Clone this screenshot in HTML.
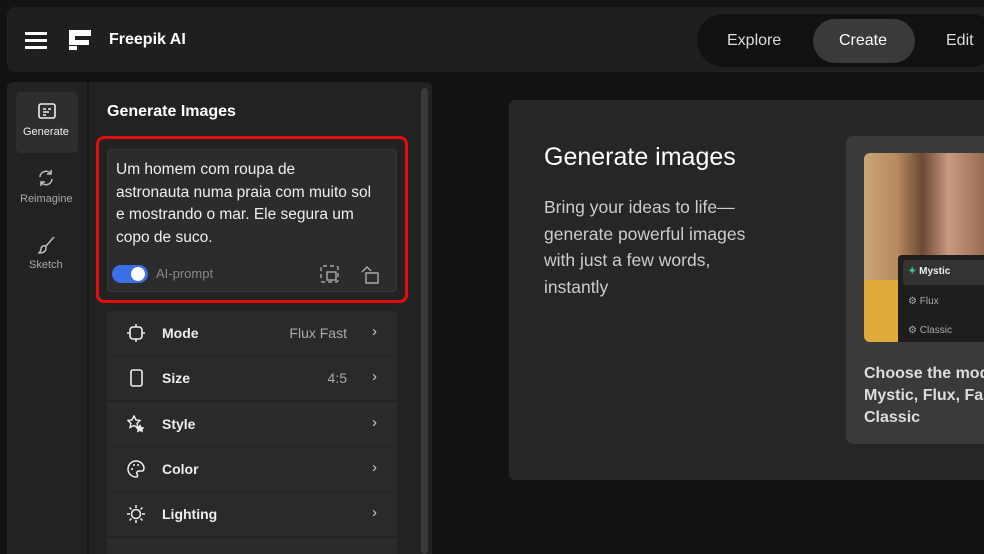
<!DOCTYPE html>
<html style="width:984px;height:554px;overflow:hidden"><head><style>
*{box-sizing:border-box;margin:0;padding:0}
body{width:984px;height:554px;background:#121212;font-family:"Liberation Sans",sans-serif;position:relative;overflow:hidden;color:#fff}
.a{position:absolute}
.row{position:absolute;left:107px;width:290px;height:44px;background:#2a2a2a;}
.row .ic{position:absolute;left:20px;top:13px}
.row .t{position:absolute;left:55px;top:14px;font-weight:bold;font-size:14px;color:#eee}
.row .v{position:absolute;right:50px;top:14px;font-size:14px;color:#aaa}
.row .c{position:absolute;right:20px;top:12px;font-size:15px;color:#ccc}
</style></head><body>
<div class="a" style="left:7px;top:7px;width:985px;height:65px;background:#1f1f1f;border-radius:8px"></div>
<div class="a" style="left:25px;top:32px;width:22px;height:3px;background:#fff;box-shadow:0 7px #fff,0 14px #fff;top:32px"></div>
<svg class="a" style="left:69px;top:30px" width="22" height="21"><path d="M0 0h22v6H6v4h14v5H6v0H0z" fill="#fff"/><rect x="0" y="16" width="8" height="4" fill="#fff"/></svg>
<div class="a" style="left:109px;top:31px;font-weight:bold;font-size:16px">Freepik AI</div>
<div class="a" style="left:697px;top:14px;width:300px;height:53px;background:#111;border-radius:27px"></div>
<div class="a" style="left:813px;top:19px;width:102px;height:44px;background:#3a3a3a;border-radius:22px"></div>
<div class="a" style="left:727px;top:32px;font-size:16px;color:#ddd">Explore</div>
<div class="a" style="left:839px;top:32px;font-size:16px;color:#fff">Create</div>
<div class="a" style="left:946px;top:32px;font-size:16px;color:#ddd">Edit</div>

<div class="a" style="left:7px;top:82px;width:425px;height:472px;background:#222;border-radius:6px 6px 0 0"></div>
<div class="a" style="left:87px;top:82px;width:2px;height:472px;background:#171717"></div>
<div class="a" style="left:421px;top:88px;width:7px;height:466px;background:#3a3a3a;border-radius:4px"></div>
<div class="a" style="left:16px;top:92px;width:62px;height:61px;background:#2e2e2e;border-radius:5px"></div>
<svg class="a" style="left:38px;top:103px" width="18" height="16"><rect x="1" y="1" width="16" height="14" rx="2" fill="none" stroke="#eee" stroke-width="1.6"/><path d="M5 6h3M10 6h3M5 9h6M5 12h3" stroke="#eee" stroke-width="1.4"/></svg>
<div class="a" style="left:23px;top:126px;font-size:11px;color:#eee">Generate</div>
<svg class="a" style="left:37px;top:169px" width="18" height="18"><path d="M3 8a6 6 0 0 1 11-3M15 10a6 6 0 0 1-11 3M14 1v4h-4M4 17v-4h4" fill="none" stroke="#bbb" stroke-width="1.6"/></svg>
<div class="a" style="left:20px;top:193px;font-size:11px;color:#aaa">Reimagine</div>
<svg class="a" style="left:38px;top:236px" width="18" height="18"><path d="M16 1L8 10M8 10c-3-1-5 1-5 3s-1 3-2 4c4 0 7-1 7-5z" fill="none" stroke="#bbb" stroke-width="1.5"/></svg>
<div class="a" style="left:29px;top:259px;font-size:11px;color:#aaa">Sketch</div>

<div class="a" style="left:107px;top:103px;font-size:16px;font-weight:bold">Generate Images</div>
<div class="a" style="left:96px;top:136px;width:312px;height:167px;border:3px solid #e40d0d;border-radius:8px"></div>
<div class="a" style="left:107px;top:149px;width:290px;height:143px;background:#2c2c2c;border:1px solid #383838;border-radius:4px"></div>
<div class="a" style="left:116px;top:159px;font-size:15.5px;line-height:22.5px;color:#eee;white-space:nowrap">Um homem com roupa de<br>astronauta numa praia com muito sol<br>e mostrando o mar. Ele segura um<br>copo de suco.</div>
<div class="a" style="left:112px;top:265px;width:36px;height:18px;background:#3a6fe8;border-radius:9px"><div class="a" style="left:19px;top:2px;width:14px;height:14px;background:#fff;border-radius:50%"></div></div>
<div class="a" style="left:156px;top:266px;font-size:13px;color:#888">AI-prompt</div>
<svg class="a" style="left:320px;top:265px" width="20" height="19"><rect x="1" y="1" width="17" height="16" rx="2" fill="none" stroke="#aaa" stroke-width="1.4" stroke-dasharray="4 3"/><rect x="7" y="7" width="9" height="8" fill="none" stroke="#aaa" stroke-width="1.4"/></svg>
<svg class="a" style="left:360px;top:265px" width="20" height="19"><path d="M2 7l5-5 4 4M6 8h12v10H6z" fill="none" stroke="#aaa" stroke-width="1.4"/></svg>

<div class="row" style="top:311px;border-radius:4px 4px 0 0"><svg class="ic" width="18" height="18"><rect x="3" y="3" width="12" height="12" rx="3" fill="none" stroke="#eee" stroke-width="1.6"/><path d="M9 0v3M9 15v3M0 9h3M15 9h3" stroke="#eee" stroke-width="1.6"/></svg><span class="t">Mode</span><span class="v">Flux Fast</span><span class="c">›</span></div>
<div class="row" style="top:356px"><svg class="ic" width="18" height="18"><rect x="4" y="1" width="11" height="16" rx="2" fill="none" stroke="#eee" stroke-width="1.6"/></svg><span class="t">Size</span><span class="v">4:5</span><span class="c">›</span></div>
<div class="row" style="top:402px"><svg class="ic" width="18" height="18"><path d="M7 1l2 4 4 .5-3 3 1 4-4-2-4 2 1-4-3-3 4-.5z" fill="none" stroke="#eee" stroke-width="1.4"/><path d="M13 9l1.5 3 3 .5-2 2 .5 3-3-1.5-3 1.5.5-3-2-2 3-.5z" fill="#eee"/></svg><span class="t">Style</span><span class="c">›</span></div>
<div class="row" style="top:447px"><svg class="ic" width="18" height="18"><path d="M9 1a8 8 0 0 0 0 16c2 0 2-2 1-3s0-3 2-3h3c2 0 2-2 2-3A8 8 0 0 0 9 1z" fill="none" stroke="#eee" stroke-width="1.5"/><circle cx="5" cy="9" r="1" fill="#eee"/><circle cx="7" cy="5" r="1" fill="#eee"/><circle cx="11" cy="5" r="1" fill="#eee"/></svg><span class="t">Color</span><span class="c">›</span></div>
<div class="row" style="top:492px"><svg class="ic" width="18" height="18"><circle cx="9" cy="9" r="4.5" fill="none" stroke="#eee" stroke-width="1.5"/><path d="M9 0v3M9 15v3M0 9h3M15 9h3M2.5 2.5l2 2M13.5 13.5l2 2M2.5 15.5l2-2M13.5 4.5l2-2" stroke="#eee" stroke-width="1.5"/></svg><span class="t">Lighting</span><span class="c">›</span></div>
<div class="row" style="top:538px;height:16px"></div>

<div class="a" style="left:509px;top:100px;width:490px;height:380px;background:#262626;border-radius:6px"></div>
<div class="a" style="left:544px;top:143px;font-size:25px;color:#fff">Generate images</div>
<div class="a" style="left:544px;top:194px;font-size:17.5px;line-height:26.5px;color:#ccc;white-space:nowrap">Bring your ideas to life—<br>generate powerful images<br>with just a few words,<br>instantly</div>
<div class="a" style="left:846px;top:136px;width:160px;height:308px;background:#3a3a3a;border-radius:7px"></div>
<div class="a" style="left:864px;top:153px;width:130px;height:189px;border-radius:6px;background:linear-gradient(90deg,#c9a675 0%,#b88a5e 25%,#6b4a34 45%,#c89a80 65%,#8a5f45 100%)"></div>
<div class="a" style="left:864px;top:280px;width:40px;height:62px;background:#e0a93a;border-radius:0 0 0 6px"></div>
<div class="a" style="left:898px;top:255px;width:90px;height:87px;background:#1e1e1e;border-radius:4px 0 0 0"></div>
<div class="a" style="left:903px;top:260px;width:85px;height:25px;background:#333;border-radius:4px"></div>
<div class="a" style="left:908px;top:266px;font-size:10px;font-weight:bold;color:#eee"><span style="color:#3ec28f">✦</span> Mystic</div>
<div class="a" style="left:908px;top:296px;font-size:10px;color:#aaa">⚙ Flux</div>
<div class="a" style="left:908px;top:325px;font-size:10px;color:#aaa">⚙ Classic</div>
<div class="a" style="left:864px;top:363px;width:200px;font-size:16px;font-weight:bold;line-height:22px;color:#ddd;white-space:nowrap">Choose the model<br>Mystic, Flux, Fast<br>Classic</div>
</body></html>
